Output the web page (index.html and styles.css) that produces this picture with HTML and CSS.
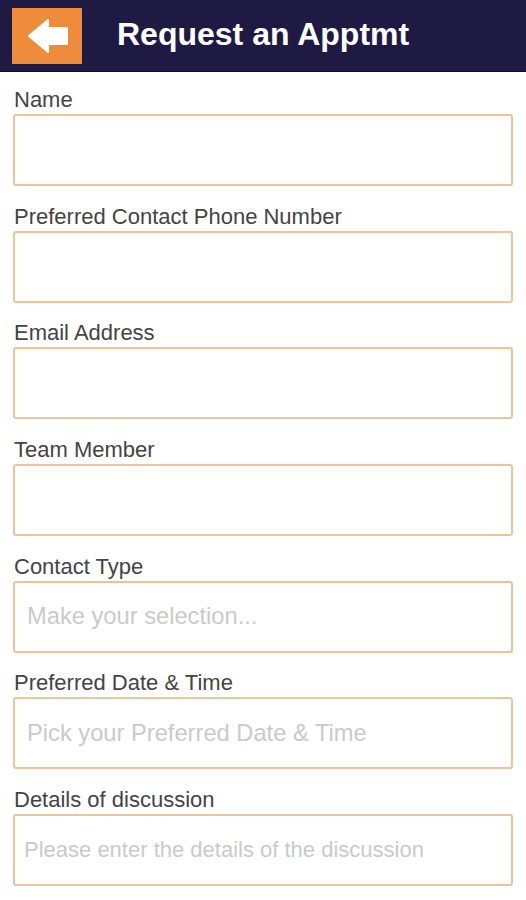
FILE: index.html
```html
<!DOCTYPE html>
<html lang="en">
<head>
    <meta charset="UTF-8">
    <title>Request an Apptmt</title>
    <link rel="stylesheet" href="styles.css">
</head>
<body>
    <header class="top-bar">
        <button class="back-btn" type="button" aria-label="Back">
            <svg width="40" height="34" viewBox="0 0 40 34">
                <path d="M1 17 L20 1 L20 9 L39 9 L39 25 L20 25 L20 33 Z" fill="#fff" stroke="#fff" stroke-width="2" stroke-linejoin="round"/>
            </svg>
        </button>
        <h1 class="title">Request an Apptmt</h1>
    </header>

    <form class="appt-form">
        <div class="field">
            <label for="name">Name</label>
            <input type="text" id="name">
        </div>
        <div class="field">
            <label for="phone">Preferred Contact Phone Number</label>
            <input type="tel" id="phone">
        </div>
        <div class="field">
            <label for="email">Email Address</label>
            <input type="email" id="email">
        </div>
        <div class="field">
            <label for="member">Team Member</label>
            <input type="text" id="member">
        </div>
        <div class="field">
            <label for="ctype">Contact Type</label>
            <input type="text" id="ctype" placeholder="Make your selection...">
        </div>
        <div class="field">
            <label for="when">Preferred Date &amp; Time</label>
            <input type="text" id="when" placeholder="Pick your Preferred Date &amp; Time">
        </div>
        <div class="field">
            <label for="details">Details of discussion</label>
            <input type="text" id="details" class="small-ph" placeholder="Please enter the details of the discussion">
        </div>
    </form>
</body>
</html>
```

FILE: styles.css
```css
body {
    margin: 0;
    background: #fff;
    font-family: 'Liberation Sans', Arial, sans-serif;
}

.top-bar {
    display: flex;
    align-items: center;
    height: 71px;
    padding-left: 12px;
    background: #1f1a44;
    border-bottom: 1px solid #0d0b1e;
}

.back-btn {
    display: flex;
    align-items: center;
    justify-content: center;
    width: 70px;
    height: 56px;
    padding: 0 0 0 2px;
    background: #ef8c3c;
    border: none;
    border-radius: 1px;
    cursor: pointer;
}

.title {
    margin: 0 0 2px 35px;
    color: #fff;
    font-family: 'Liberation Sans', Arial, sans-serif;
    font-size: 32px;
    font-weight: bold;
}

.appt-form {
    padding: 17px 13px 0 13px;
}

.field {
    display: flex;
    flex-direction: column;
    margin-bottom: 19.67px;
}

.field label {
    height: 22px;
    padding-left: 1px;
    margin-bottom: 3px;
    color: #444;
    font-family: 'Liberation Sans', Arial, sans-serif;
    font-size: 22px;
    line-height: 22px;
}

.field input {
    height: 72px;
    box-sizing: border-box;
    padding: 0 12px;
    border: 2px solid #ecc49c;
    border-radius: 3px;
    font-family: 'Liberation Sans', Arial, sans-serif;
    font-size: 23.7px;
    color: #333;
    outline: none;
}

.field input::placeholder {
    color: #cacaca;
}

.field input.small-ph {
    padding-left: 9px;
    font-size: 22px;
}
```
